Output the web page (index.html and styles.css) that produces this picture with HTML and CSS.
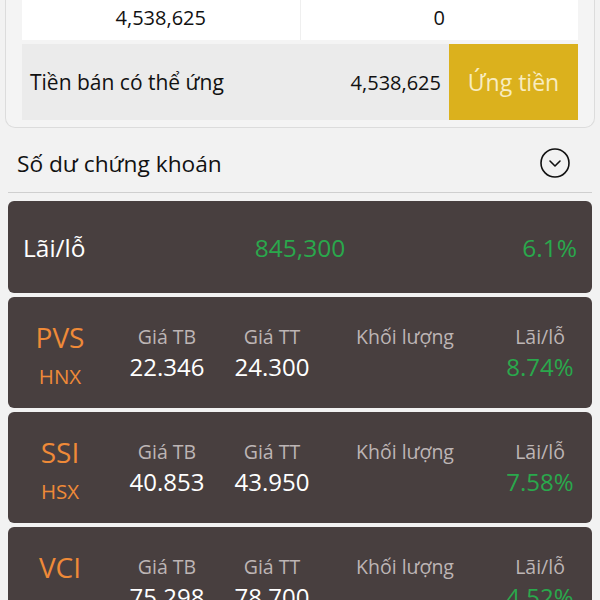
FILE: index.html
```html
<!DOCTYPE html>
<html lang="vi">

<head>
    <meta charset="UTF-8">
    <meta name="viewport" content="width=device-width, initial-scale=1.0">
    <title>Tài sản</title>
    <link rel="stylesheet" href="styles.css">
</head>

<body>
    <!-- tiền -->
    <div class="cash-card">
        <div class="cash-row">
            <div class="cash-cell">4,538,625</div>
            <div class="cash-cell">0</div>
        </div>
        <div class="advance-row">
            <div class="advance-label">Tiền bán có thể ứng</div>
            <div class="advance-value">4,538,625</div>
            <div class="advance-btn">Ứng tiền</div>
        </div>
    </div>

    <!-- chứng khoán -->
    <div class="section-head">
        <span class="section-title">Số dư chứng khoán</span>
        <svg class="toggle-icon" width="32" height="32" viewBox="0 0 32 32">
            <circle cx="16" cy="16" r="14" fill="none" stroke="#111" stroke-width="1.6" />
            <path d="M11 14 L16 19 L21 14" fill="none" stroke="#111" stroke-width="1.6" stroke-linecap="round" stroke-linejoin="round" />
        </svg>
    </div>

    <ul class="stock-list">
        <li class="summary-card">
            <span class="summary-label">Lãi/lỗ</span>
            <span class="summary-value">845,300</span>
            <span class="summary-pct">6.1%</span>
        </li>
        <li class="stock-card">
            <div class="col col-code">
                <span class="code">PVS</span>
                <span class="exchange">HNX</span>
            </div>
            <div class="col">
                <span class="label">Giá TB</span>
                <span class="value">22.346</span>
            </div>
            <div class="col">
                <span class="label">Giá TT</span>
                <span class="value">24.300</span>
            </div>
            <div class="col">
                <span class="label">Khối lượng</span>
                <span class="value"></span>
            </div>
            <div class="col col-pl">
                <span class="label">Lãi/lỗ</span>
                <span class="value up">8.74%</span>
            </div>
        </li>
        <li class="stock-card">
            <div class="col col-code">
                <span class="code">SSI</span>
                <span class="exchange">HSX</span>
            </div>
            <div class="col">
                <span class="label">Giá TB</span>
                <span class="value">40.853</span>
            </div>
            <div class="col">
                <span class="label">Giá TT</span>
                <span class="value">43.950</span>
            </div>
            <div class="col">
                <span class="label">Khối lượng</span>
                <span class="value"></span>
            </div>
            <div class="col col-pl">
                <span class="label">Lãi/lỗ</span>
                <span class="value up">7.58%</span>
            </div>
        </li>
        <li class="stock-card">
            <div class="col col-code">
                <span class="code">VCI</span>
                <span class="exchange">HSX</span>
            </div>
            <div class="col">
                <span class="label">Giá TB</span>
                <span class="value">75.298</span>
            </div>
            <div class="col">
                <span class="label">Giá TT</span>
                <span class="value">78.700</span>
            </div>
            <div class="col">
                <span class="label">Khối lượng</span>
                <span class="value"></span>
            </div>
            <div class="col col-pl">
                <span class="label">Lãi/lỗ</span>
                <span class="value up">4.52%</span>
            </div>
        </li>
    </ul>
</body>

</html>
```

FILE: styles.css
```css
* {
    margin: 0;
    padding: 0;
    box-sizing: border-box;
}

body {
    height: 600px;
    background-color: #f2f2f2;
    font-family: "Open Sans", "Noto Sans", sans-serif;
    color: #111;
    overflow: hidden;
}

ul,
li {
    list-style: none;
}

/* khung tiền */
.cash-card {
    margin: 0 5px;
    padding: 0 16px 7px;
    border: 1px solid #dcdcdc;
    border-top: none;
    border-radius: 0 0 10px 10px;
    background-color: #f4f4f4;
}

.cash-row {
    display: flex;
    height: 40px;
    background-color: #fff;
}

.cash-cell {
    flex: 1;
    font-size: 20px;
    line-height: 35px;
    text-align: center;
}

.cash-cell+.cash-cell {
    border-left: 1px solid #efefef;
}

.advance-row {
    display: flex;
    align-items: center;
    height: 76px;
    margin-top: 4px;
    background-color: #ebebeb;
}

.advance-label {
    flex: 1;
    padding-left: 8px;
    font-size: 21px;
}

.advance-value {
    padding-right: 8px;
    font-size: 20px;
}

.advance-btn {
    width: 129px;
    height: 100%;
    line-height: 76px;
    text-align: center;
    font-size: 23px;
    color: #f8ecc0;
    background-color: #dbb11d;
}

/* tiêu đề */
.section-head {
    display: flex;
    align-items: center;
    justify-content: space-between;
    height: 65px;
    margin: 0 8px;
    padding: 6px 21px 0 9px;
    border-bottom: 1px solid #cfcfcf;
}

.section-title {
    font-size: 22.7px;
}

/* danh sách */
.stock-list {
    display: flex;
    flex-direction: column;
    gap: 4px;
    margin: 8px 8px 0;
}

.summary-card,
.stock-card {
    border-radius: 6px;
    background-color: #483f3f;
}

.summary-card {
    display: grid;
    grid-template-columns: 1fr auto 1fr;
    align-items: center;
    height: 92px;
    padding: 0 15px;
    font-size: 24.5px;
}

.summary-label {
    color: #fff;
}

.summary-value {
    color: #2aa84c;
}

.summary-pct {
    text-align: right;
    color: #2aa84c;
}

.stock-card {
    display: grid;
    grid-template-columns: 92px 104px 106px 160px 1fr;
    padding: 25px 15px 17px;
}

.col {
    display: flex;
    flex-direction: column;
    align-items: center;
}

.col-code {
    padding-right: 18px;
    gap: 9px;
    color: #ef8a38;
}

.col-pl {
    padding-left: 18px;
}

.code {
    font-size: 28px;
    line-height: 30px;
}

.exchange {
    font-size: 20.5px;
    line-height: 30px;
}

.label {
    font-size: 19.5px;
    line-height: 30px;
    color: #bdb5b5;
}

.value {
    font-size: 24px;
    line-height: 30px;
    color: #fff;
}

.value.up {
    color: #2aa84c;
}
```
